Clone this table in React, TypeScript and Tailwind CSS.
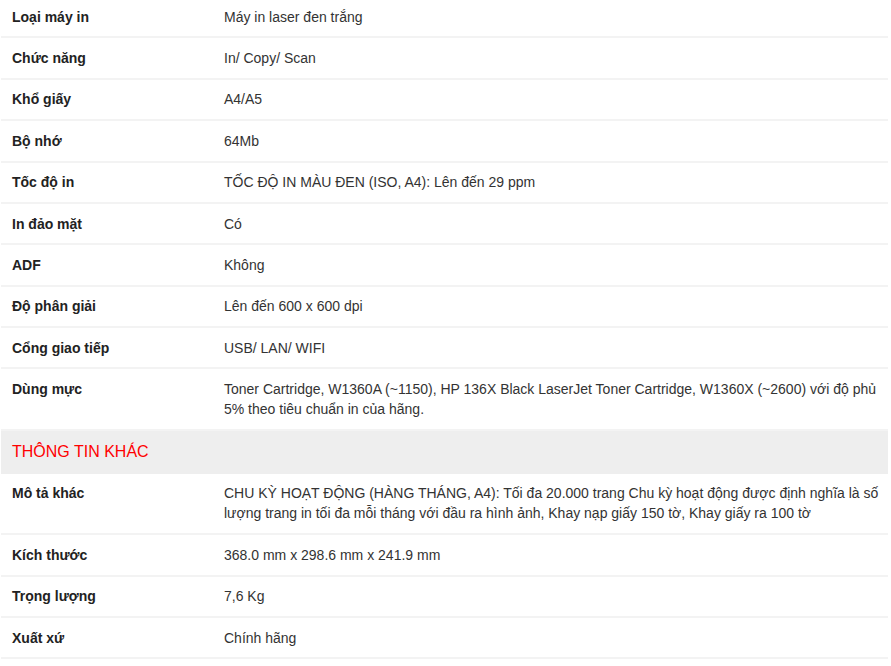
type Spec = { label: string; value: string };

const specs: Spec[] = [
  { label: "Loại máy in", value: "Máy in laser đen trắng" },
  { label: "Chức năng", value: "In/ Copy/ Scan" },
  { label: "Khổ giấy", value: "A4/A5" },
  { label: "Bộ nhớ", value: "64Mb" },
  { label: "Tốc độ in", value: "TỐC ĐỘ IN MÀU ĐEN (ISO, A4): Lên đến 29 ppm" },
  { label: "In đảo mặt", value: "Có" },
  { label: "ADF", value: "Không" },
  { label: "Độ phân giải", value: "Lên đến 600 x 600 dpi" },
  { label: "Cổng giao tiếp", value: "USB/ LAN/ WIFI" },
  {
    label: "Dùng mực",
    value:
      "Toner Cartridge, W1360A (~1150), HP 136X Black LaserJet Toner Cartridge, W1360X (~2600) với độ phủ 5% theo tiêu chuẩn in của hãng.",
  },
];

const others: Spec[] = [
  {
    label: "Mô tả khác",
    value:
      "CHU KỲ HOẠT ĐỘNG (HÀNG THÁNG, A4): Tối đa 20.000 trang Chu kỳ hoạt động được định nghĩa là số lượng trang in tối đa mỗi tháng với đầu ra hình ảnh, Khay nạp giấy 150 tờ, Khay giấy ra 100 tờ",
  },
  { label: "Kích thước", value: "368.0 mm x 298.6 mm x 241.9 mm" },
  { label: "Trọng lượng", value: "7,6 Kg" },
  { label: "Xuất xứ", value: "Chính hãng" },
];

function Row({ label, value }: Spec) {
  return (
    <div className="grid grid-cols-[212px_1fr] border-b-2 border-[#f3f3f3]">
      <div className="px-[11px] py-[9.7px] font-bold text-[#222]">{label}</div>
      <div className="pl-[11px] pr-[4px] py-[9.7px] text-[#333]">{value}</div>
    </div>
  );
}

export default function App() {
  return (
    <div className="h-[666px] overflow-hidden bg-white">
      <div
        className="ml-[1px] mt-[-3px] w-[887px] text-[14px] leading-[20px]"
        style={{ fontFamily: '"Liberation Sans", Arial, sans-serif' }}
      >
        {specs.map((s) => (
          <Row key={s.label} {...s} />
        ))}
        {/* nhóm thông tin khác */}
        <div className="flex h-[43px] items-center bg-[#eeeeee] px-[11px] text-[16px] text-[#ff0000]">
          THÔNG TIN KHÁC
        </div>
        {others.map((s) => (
          <Row key={s.label} {...s} />
        ))}
      </div>
    </div>
  );
}
